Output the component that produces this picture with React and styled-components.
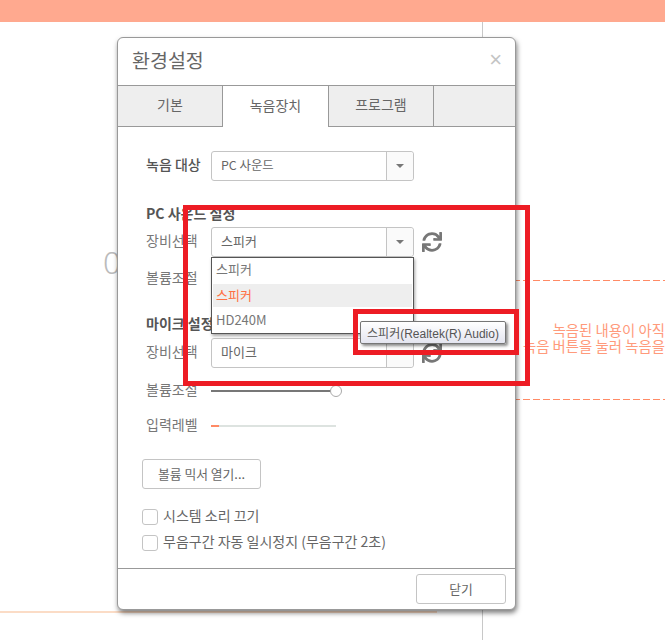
import React from 'react';
import styled, { createGlobalStyle } from 'styled-components';
import { FaSync } from 'react-icons/fa';

const GlobalStyle = createGlobalStyle`
    html, body {
        margin: 0;
        padding: 0;
        background: #fff;
        font-family: "Noto Sans CJK KR", "Noto Sans", sans-serif;
        overflow: hidden;
    }
    * {
        box-sizing: border-box;
    }
`

const Page = styled.div`
    position: relative;
    width: 665px;
    height: 640px;
    overflow: hidden;
`

const TopBar = styled.div`
    height: 22px;
    background: #ffa98f;
`

const Workspace = styled.div`
    display: flex;
    height: 618px;
`

const LeftPane = styled.div`
    width: 483px;
    border-right: 1px solid #c8c8c8;
`

const Zero = styled.div`
    margin: 220px 0 0 103px;
    height: 40px;
    line-height: 40px;
    font-family: "Noto Sans", sans-serif;
    font-size: 31px;
    font-weight: 300;
    color: #bbb;
`

const TimeLine = styled.div`
    width: 437px;
    height: 2px;
    margin-top: 329px;
    background: #fbdcc6;
`

const RightPane = styled.div`
    flex: 1;
    min-width: 0;
    display: flex;
    flex-direction: column;
    padding-top: 258px;
`

const DashLine = styled.div`
    height: 1px;
    background: repeating-linear-gradient(90deg, #ff8a65 0 7px, transparent 7px 10px);
`

const EmptyBox = styled.div`
    display: flex;
    flex-direction: column;
    align-items: flex-end;
    justify-content: center;
    height: 118px;
    padding-bottom: 5px;
`

const Message = styled.div`
    height: 16px;
    line-height: 16px;
    font-size: 14.4px;
    color: #ff9a7b;
    white-space: nowrap;
`

const Dialog = styled.div`
    position: absolute;
    left: 117px;
    top: 37px;
    width: 399px;
    height: 573px;
    display: flex;
    flex-direction: column;
    background: #fff;
    border: 1px solid #999;
    border-radius: 6px;
    box-shadow: 1px 3px 5px rgba(0, 0, 0, 0.5);
`

const TitleBar = styled.div`
    height: 47px;
    flex: none;
    display: flex;
    align-items: center;
    justify-content: space-between;
    padding: 0 13px 4px 14px;
    font-size: 19.5px;
    color: #666;
`

const CloseMark = styled.span`
    font-family: "Liberation Sans", sans-serif;
    font-size: 22px;
    color: #c4c4c4;
`

const Tabs = styled.div`
    display: flex;
    height: 42px;
    flex: none;
`

const Tab = styled.div`
    width: ${props => props.width}px;
    flex: ${props => props.grow ? 1 : 'none'};
    display: flex;
    align-items: center;
    justify-content: center;
    padding-bottom: 4px;
    font-size: 14px;
    color: #666;
    background: ${props => props.active ? '#fff' : '#eee'};
    border-top: 1px solid #999;
    border-right: ${props => props.grow ? 'none' : '1px solid #999'};
    border-bottom: ${props => props.active ? 'none' : '1px solid #999'};
`

const Body = styled.div`
    flex: 1;
    padding: 24px 0 0 24px;
`

const Row = styled.div`
    display: flex;
    align-items: center;
    gap: 8px;
    margin-top: ${props => props.top || 0}px;
    height: ${props => props.tall || 20}px;
`

const Label = styled.div`
    width: 65px;
    flex: none;
    padding: 0 0 ${props => props.lift || 0}px 4px;
    font-size: 14px;
    font-weight: ${props => props.strong ? 500 : 400};
    color: ${props => props.strong ? '#555' : '#777'};
`

const Heading = styled.div`
    height: 20px;
    line-height: 20px;
    margin-top: ${props => props.top}px;
    padding-left: 4px;
    font-size: 14px;
    font-weight: 700;
    color: #555;
`

const Select = styled.div`
    position: relative;
    display: flex;
    width: 203px;
    height: 30px;
    margin-left: -4px;
    border: 1px solid #c4c4c4;
    border-radius: 3px;
`

const SelectValue = styled.div`
    flex: 1;
    display: flex;
    align-items: center;
    padding: 0 0 3px 9px;
    font-size: ${props => props.small ? 12.4 : 13}px;
    color: #666;
`

const SelectArrow = styled.div`
    width: 27px;
    display: flex;
    align-items: center;
    justify-content: center;
    background: #fafafa;
    border-left: 1px solid #c4c4c4;
    border-radius: 0 3px 3px 0;

    &::after {
        content: "";
        border-left: 4px solid transparent;
        border-right: 4px solid transparent;
        border-top: 4px solid #777;
    }
`

const Refresh = styled(FaSync)`
    width: 20px;
    height: 20px;
    color: #777;
`

const Menu = styled.div`
    position: absolute;
    z-index: 2;
    left: -1px;
    top: 29px;
    width: 203px;
    height: 77px;
    padding: 1px;
    background: #fff;
    border: 1px solid #555;
    box-shadow: 1px 2px 3px rgba(0, 0, 0, 0.35);
`

const MenuItem = styled.div`
    height: ${props => props.tall}px;
    padding: 0 3px ${props => props.lift}px;
    display: flex;
    align-items: center;
    font-size: 13px;
    color: ${props => props.selected ? '#ff7043' : '#777'};
    background: ${props => props.selected ? '#eee' : 'transparent'};
`

const Slider = styled.div`
    position: relative;
    width: 125px;
    height: 2px;
    margin-left: -4px;
    background: #dde3e0;
`

const SliderFill = styled.div`
    height: 100%;
    background: ${props => props.color};
`

const SliderThumb = styled.div`
    position: absolute;
    right: -6px;
    top: -5px;
    width: 12px;
    height: 12px;
    border-radius: 50%;
    background: #fff;
    border: 1px solid #aaa;
`

const Button = styled.div`
    display: flex;
    align-items: center;
    justify-content: center;
    width: ${props => props.width}px;
    height: 30px;
    margin-top: ${props => props.top || 0}px;
    padding-bottom: 2px;
    font-size: 12.8px;
    color: #666;
    background: #fff;
    border: 1px solid #c4c4c4;
    border-radius: 3px;
`

const CheckRow = styled.div`
    display: flex;
    align-items: center;
    gap: 5px;
    height: 16px;
    margin-top: ${props => props.top}px;
    font-size: 14px;
    color: #666;
`

const CheckText = styled.span`
    position: relative;
    top: -2px;
`

const CheckBox = styled.span`
    flex: none;
    width: 16px;
    height: 16px;
    background: #fff;
    border: 1px solid #c4c4c4;
    border-radius: 3px;
`

const Footer = styled.div`
    display: flex;
    align-items: center;
    justify-content: flex-end;
    flex: none;
    height: 41px;
    padding-right: 9px;
    border-top: 1px solid #999;
`

const Tooltip = styled.div`
    position: absolute;
    z-index: 3;
    left: 360px;
    top: 321px;
    width: 146px;
    height: 23px;
    display: flex;
    align-items: center;
    justify-content: center;
    white-space: nowrap;
    font-family: "Liberation Sans", "Noto Sans CJK KR", sans-serif;
    font-size: 12px;
    color: #555;
    background: linear-gradient(#fff, #e4e5f0);
    border: 1px solid #767676;
    border-radius: 2px;
    box-shadow: 2px 2px 3px rgba(0, 0, 0, 0.45);
`

const Annotation = styled.div`
    position: absolute;
    z-index: 4;
    left: ${props => props.x}px;
    top: ${props => props.y}px;
    width: ${props => props.w}px;
    height: ${props => props.h}px;
    border: 5px solid #ed1c24;
`

function Device({ value, open, small }) {
    return (
        <Select>
            <SelectValue small={small}>{value}</SelectValue>
            <SelectArrow />
            {open && (
                <Menu>
                    <MenuItem tall={25} lift={7}>스피커</MenuItem>
                    <MenuItem tall={23} lift={3} selected>스피커</MenuItem>
                    <MenuItem tall={26} lift={1}>HD240M</MenuItem>
                </Menu>
            )}
        </Select>
    );
}

export default function App() {
    return (
        <Page>
            <GlobalStyle />
            <TopBar />
            <Workspace>
                <LeftPane>
                    <Zero>0</Zero>
                    <TimeLine />
                </LeftPane>
                <RightPane>
                    <DashLine />
                    <EmptyBox>
                        <Message>녹음된 내용이 아직</Message>
                        <Message>녹음 버튼을 눌러 녹음을</Message>
                    </EmptyBox>
                    <DashLine />
                </RightPane>
            </Workspace>

            <Dialog>
                <TitleBar>
                    환경설정
                    <CloseMark>×</CloseMark>
                </TitleBar>
                <Tabs>
                    <Tab width={105}>기본</Tab>
                    <Tab width={106} active>녹음장치</Tab>
                    <Tab width={105}>프로그램</Tab>
                    <Tab grow />
                </Tabs>
                <Body>
                    <Row tall={30}>
                        <Label strong lift={4}>녹음 대상</Label>
                        <Device value="PC 사운드" small />
                    </Row>

                    <Heading top={22}>PC 사운드 설정</Heading>
                    <Row tall={30} top={4}>
                        <Label lift={4}>장비선택</Label>
                        <Device value="스피커" open />
                        <Refresh />
                    </Row>
                    <Row top={10}>
                        <Label>볼륨조절</Label>
                        <Slider><SliderFill color="#777" style={{ width: '100%' }} /></Slider>
                    </Row>

                    <Heading top={26}>마이크 설정</Heading>
                    <Row tall={30} top={5}>
                        <Label lift={4}>장비선택</Label>
                        <Device value="마이크" />
                        <Refresh />
                    </Row>
                    <Row top={13}>
                        <Label lift={4}>볼륨조절</Label>
                        <Slider>
                            <SliderFill color="#777" style={{ width: '100%' }} />
                            <SliderThumb />
                        </Slider>
                    </Row>
                    <Row top={15}>
                        <Label lift={4}>입력레벨</Label>
                        <Slider><SliderFill color="#ff8a65" style={{ width: '6%' }} /></Slider>
                    </Row>

                    <Button width={119} top={23}>볼륨 믹서 열기...</Button>

                    <CheckRow top={20}>
                        <CheckBox />
                        <CheckText>시스템 소리 끄기</CheckText>
                    </CheckRow>
                    <CheckRow top={10}>
                        <CheckBox />
                        <CheckText>무음구간 자동 일시정지 (무음구간 2초)</CheckText>
                    </CheckRow>
                </Body>
                <Footer>
                    <Button width={90}>닫기</Button>
                </Footer>
            </Dialog>

            <Tooltip>스피커(Realtek(R) Audio)</Tooltip>
            <Annotation x={183} y={205} w={347} h={181} />
            <Annotation x={353} y={309} w={166} h={46} />
        </Page>
    );
}
